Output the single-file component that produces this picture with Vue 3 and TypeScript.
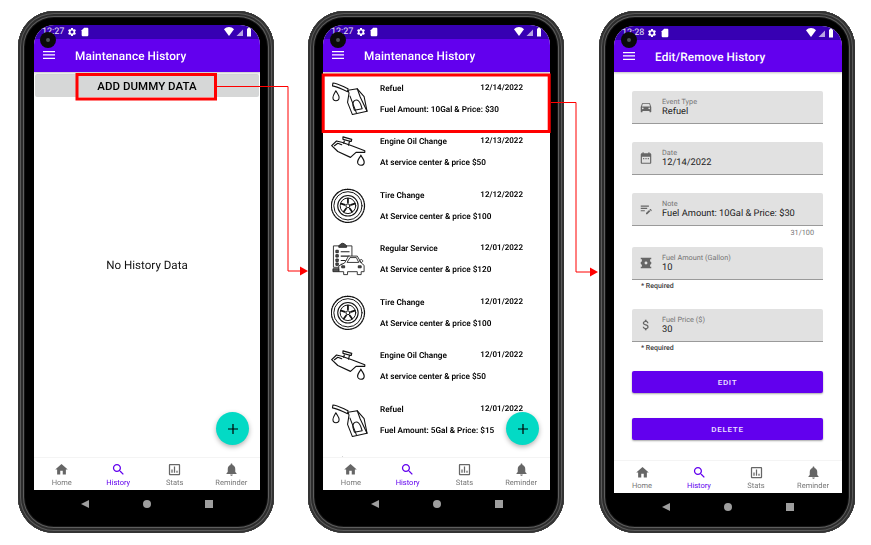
<script setup lang="ts">
interface Phone {
  id: 'empty' | 'list' | 'edit'
  time: string
  title: string
}

interface HistoryRow {
  icon: string
  title: string
  date: string
  note: string
}

interface Field {
  icon: string
  label: string
  value: string
  helper?: string
  helperClass?: string
}

const phones: Phone[] = [
  { id: 'empty', time: '12:27', title: 'Maintenance History' },
  { id: 'list', time: '12:27', title: 'Maintenance History' },
  { id: 'edit', time: '12:28', title: 'Edit/Remove History' }
]

// last row is scrolled under the tab bar, only the date and icon tip show
const rows: HistoryRow[] = [
  { icon: '#nozzle', title: 'Refuel', date: '12/14/2022', note: 'Fuel Amount: 10Gal & Price: $30' },
  { icon: '#oilcan', title: 'Engine Oil Change', date: '12/13/2022', note: 'At service center & price $50' },
  { icon: '#tire', title: 'Tire Change', date: '12/12/2022', note: 'At Service center & price $100' },
  { icon: '#service', title: 'Regular Service', date: '12/01/2022', note: 'At Service center & price $120' },
  { icon: '#tire', title: 'Tire Change', date: '12/01/2022', note: 'At Service center & price $100' },
  { icon: '#oilcan', title: 'Engine Oil Change', date: '12/01/2022', note: 'At service center & price $50' },
  { icon: '#nozzle', title: 'Refuel', date: '12/01/2022', note: 'Fuel Amount: 5Gal & Price: $15' },
  { icon: '#service', title: '', date: '12/01/2022', note: '' }
]

const fields: Field[] = [
  { icon: '#car', label: 'Event Type', value: 'Refuel' },
  { icon: '#calendar', label: 'Date', value: '12/14/2022' },
  { icon: '#note', label: 'Note', value: 'Fuel Amount: 10Gal & Price: $30', helper: '31/100', helperClass: 'count' },
  { icon: '#fuel', label: 'Fuel Amount (Gallon)', value: '10', helper: '* Required', helperClass: 'required' },
  { icon: '#dollar', label: 'Fuel Price ($)', value: '30', helper: '* Required', helperClass: 'required' }
]

const tabs = [
  { icon: '#home', label: 'Home' },
  { icon: '#search', label: 'History' },
  { icon: '#stats', label: 'Stats' },
  { icon: '#bell', label: 'Reminder' }
]
</script>

<template>
  <div class="page">
    <svg class="defs" xmlns="http://www.w3.org/2000/svg">
      <symbol id="home" viewBox="0 0 24 24"><path d="M10 20v-6h4v6h5v-8h3L12 3 2 12h3v8z" /></symbol>
      <symbol id="search" viewBox="0 0 24 24"><path d="M15.5 14h-.79l-.28-.27C15.41 12.59 16 11.11 16 9.5 16 5.91 13.09 3 9.5 3S3 5.91 3 9.5 5.91 16 9.5 16c1.61 0 3.09-.59 4.23-1.57l.27.28v.79l5 4.99L20.49 19l-4.99-5zm-6 0C7.01 14 5 11.99 5 9.5S7.01 5 9.5 5 14 7.01 14 9.5 11.99 14 9.5 14z" /></symbol>
      <symbol id="stats" viewBox="0 0 24 24"><path d="M19 3H5c-1.1 0-2 .9-2 2v14c0 1.1.9 2 2 2h14c1.1 0 2-.9 2-2V5c0-1.1-.9-2-2-2zm0 16H5V5h14v14zM7 12h2v5H7zm4-5h2v10h-2zm4 7h2v3h-2z" /></symbol>
      <symbol id="bell" viewBox="0 0 24 24"><path d="M12 22c1.1 0 2-.9 2-2h-4c0 1.1.89 2 2 2zm6-6v-5c0-3.07-1.64-5.64-4.5-6.32V4c0-.83-.67-1.5-1.5-1.5s-1.5.67-1.5 1.5v.68C7.63 5.36 6 7.92 6 11v5l-2 2v1h16v-1l-2-2z" /></symbol>
      <symbol id="gear" viewBox="0 0 24 24"><path d="M19.14 12.94c.04-.3.06-.61.06-.94 0-.32-.02-.64-.07-.94l2.03-1.58c.18-.14.23-.41.12-.61l-1.92-3.32c-.12-.22-.37-.29-.59-.22l-2.39.96c-.5-.38-1.03-.7-1.62-.94l-.36-2.54c-.04-.24-.24-.41-.48-.41h-3.84c-.24 0-.43.17-.47.41l-.36 2.54c-.59.24-1.13.57-1.62.94l-2.39-.96c-.22-.08-.47 0-.59.22L2.74 8.87c-.12.21-.08.47.12.61l2.03 1.58c-.05.3-.09.63-.09.94s.02.64.07.94l-2.03 1.58c-.18.14-.23.41-.12.61l1.92 3.32c.12.22.37.29.59.22l2.39-.96c.5.38 1.03.7 1.62.94l.36 2.54c.05.24.24.41.48.41h3.84c.24 0 .44-.17.47-.41l.36-2.54c.59-.24 1.13-.56 1.62-.94l2.39.96c.22.08.47 0 .59-.22l1.92-3.32c.12-.22.07-.47-.12-.61l-2.01-1.58zM12 15.6c-1.98 0-3.6-1.62-3.6-3.6s1.62-3.6 3.6-3.6 3.6 1.62 3.6 3.6-1.62 3.6-3.6 3.6z" /></symbol>
      <symbol id="sd" viewBox="0 0 24 24"><path d="M18 2h-8L4 8v12c0 1.1.9 2 2 2h12c1.1 0 2-.9 2-2V4c0-1.1-.9-2-2-2z" /></symbol>
      <symbol id="car" viewBox="0 0 24 24"><path d="M18.92 6.01C18.72 5.42 18.16 5 17.5 5h-11c-.66 0-1.21.42-1.42 1.01L3 12v8c0 .55.45 1 1 1h1c.55 0 1-.45 1-1v-1h12v1c0 .55.45 1 1 1h1c.55 0 1-.45 1-1v-8l-2.08-5.99zM6.5 16c-.83 0-1.5-.67-1.5-1.5S5.67 13 6.5 13s1.5.67 1.5 1.5S7.33 16 6.5 16zm11 0c-.83 0-1.5-.67-1.5-1.5s.67-1.5 1.5-1.5 1.5.67 1.5 1.5-.67 1.5-1.5 1.5zM5 11l1.5-4.5h11L19 11H5z" /></symbol>
      <symbol id="calendar" viewBox="0 0 24 24"><path d="M19 4h-1V2h-2v2H8V2H6v2H5c-1.11 0-1.99.9-1.99 2L3 20c0 1.1.89 2 2 2h14c1.1 0 2-.9 2-2V6c0-1.1-.9-2-2-2zm0 16H5V10h14v10zM9 14H7v-2h2v2zm4 0h-2v-2h2v2zm4 0h-2v-2h2v2z" /></symbol>
      <symbol id="note" viewBox="0 0 24 24"><path d="M3 10h11v2H3v-2zm0-2h14V6H3v2zm0 8h7v-2H3v2zm15.01-3.13l.71-.71c.39-.39 1.02-.39 1.41 0l1.41 1.41c.39.39.39 1.02 0 1.41l-.71.71-2.82-2.82zm-.71.71l-5.3 5.3V21h2.12l5.3-5.3-2.12-2.12z" /></symbol>
      <symbol id="fuel" viewBox="0 0 24 24"><path fill-rule="evenodd" d="M3 3h18v2.500h-2V8a2.500 2.500 0 0 0 2 2.400v3.200A2.500 2.500 0 0 0 19 16v2.500h2V21H3v-2.500h2V16a2.500 2.500 0 0 0-2-2.400v-3.200A2.500 2.500 0 0 0 5 8V5.500H3zM12 9.500a2.500 2.500 0 1 0 0 5 2.500 2.500 0 0 0 0-5z" /></symbol>
      <symbol id="dollar" viewBox="0 0 24 24"><path d="M11.8 10.9c-2.27-.59-3-1.2-3-2.15 0-1.09 1.01-1.85 2.7-1.85 1.78 0 2.44.85 2.5 2.1h2.21c-.07-1.72-1.12-3.3-3.21-3.81V3h-3v2.16c-1.94.42-3.5 1.68-3.5 3.61 0 2.31 1.91 3.46 4.7 4.13 2.5.6 3 1.48 3 2.41 0 .69-.49 1.79-2.7 1.79-2.06 0-2.87-.92-2.98-2.1h-2.2c.12 2.19 1.76 3.42 3.68 3.83V21h3v-2.15c1.95-.37 3.5-1.5 3.5-3.55 0-2.84-2.43-3.81-4.7-4.4z" /></symbol>

      <symbol id="nozzle" viewBox="0 0 38 36">
        <g fill="none" stroke="#111" stroke-width="1.1" stroke-linejoin="round" stroke-linecap="round">
          <path d="M2 1.500C6 1.500 11 4.500 17.500 7.500L17 10.500C11 8 7 5.500 1.500 4.500z" />
          <path d="M17.500 9L27 7.500L34 15.500L37 30.500L22 34L17 21.500L18.500 12z" />
          <path d="M27 7.500L30 16L37 30.500M19.500 15L26 32" />
          <path d="M24 29.500L22.500 24.500C22 21 24 19 26 19C28 19 29.500 21 30.500 23.500L32 28z" />
          <path d="M5 9.500C3.500 12.500 2 14 2 16.500C2 18.500 3.500 19.800 5 19.800C6.800 19.800 8.300 18.500 8.300 16.500C8.300 14 6.500 12.500 5 9.500z" />
        </g>
      </symbol>
      <symbol id="oilcan" viewBox="0 0 38 36">
        <g fill="none" stroke="#111" stroke-width="1.200" stroke-linejoin="round" stroke-linecap="round">
          <path d="M0.700 10.500L5.700 5.700L11 7L22 10.800L34.700 15.700V17.300H25.700L20 22.500L7 16.500z" />
          <path d="M3.500 10.500L7 8L11 9.500" />
          <path d="M12.300 1.500L21.300 4L20.700 6.200L12.300 4zM14 4.500L13 8M19 6L18 10" />
          <path d="M30.700 20.200C29.200 23.200 27.300 24.800 27.300 27.200C27.300 29.200 29 30.600 30.700 30.600C32.500 30.600 34.100 29.200 34.100 27.200C34.100 24.800 32.200 23.200 30.700 20.200z" />
        </g>
      </symbol>
      <symbol id="tire" viewBox="0 0 38 36">
        <g fill="none" stroke="#111" stroke-linecap="round">
          <circle cx="17.400" cy="17.800" r="17" stroke-width="1.300" stroke-dasharray="1.800 1" />
          <circle cx="17.400" cy="17.800" r="14.500" stroke-width="1" />
          <circle cx="17.400" cy="17.800" r="10.500" stroke-width="1.100" />
          <circle cx="17.400" cy="17.800" r="8" stroke-width="1" />
          <circle cx="17.400" cy="17.800" r="2" stroke-width="1" />
          <path stroke-width="1.800" d="M17.400 14.500V10.500M20.500 16.800L24.400 15.500M19.300 20.500L21.700 23.800M15.500 20.500L13.100 23.800M14.300 16.800L10.400 15.500" />
        </g>
      </symbol>
      <symbol id="service" viewBox="0 0 38 36">
        <g fill="none" stroke="#222" stroke-width="0.900" stroke-linejoin="round">
          <path fill="#fff" d="M2.500 3.500H21.500V25.500H2.500z" />
          <path fill="#444" d="M8 3.500L10 1.500L12 0.800L14 1.500L16 3.500V5H8z" />
          <path fill="#555" d="M5 8h2.500v2.500H5zM5 12.500h2.500V15H5zM5 17h2.500v2.500H5zM5 21h2.500v2.500H5z" />
          <path stroke-width="1.200" d="M10 9.500H19M10 14H19M10 18.500H15M10 22.500H13" />
          <path fill="#fff" d="M14 21L18 14H27L31 21L34 23.500V30H31V33H27V30H17V33H13V30H8V24z" />
          <path d="M16.500 20.500L19.500 15.500H26L28.500 20.500zM31 17.500a1.500 1.500 0 1 0 .1 0" />
          <path fill="#555" d="M2 27h6v3H2zM11 24h3v2h-3zM28 24h3v2h-3z" />
        </g>
      </symbol>
    </svg>

    <div v-for="phone in phones" :key="phone.id" class="phone" :class="`phone-${phone.id}`">
      <span class="camera"><i /></span>
      <div class="screen">
        <div class="status">
          <span class="clock">{{ phone.time }}</span>
          <svg class="status-icon gear"><use href="#gear" /></svg>
          <svg class="status-icon sd"><use href="#sd" /></svg>
          <span class="spacer" />
          <svg class="signals" viewBox="0 0 30 10" width="30" height="10">
            <path d="M0 2.200C3-.7 7-.7 10 2.200L5 9z" fill="#fff" />
            <path d="M19 2.500V9H12.500z" fill="#fff" fill-opacity=".65" />
            <path d="M23 1.500h1V.5h2v1h1V9.500H23z" fill="#fff" />
          </svg>
        </div>
        <div class="appbar">
          <svg class="menu" viewBox="0 0 12 8" width="12" height="8">
            <path d="M0 0h12v1.300H0zM0 3.300h12v1.300H0zM0 6.700h12V8H0z" fill="#fff" />
          </svg>
          <span class="title">{{ phone.title }}</span>
        </div>

        <div class="content">
          <template v-if="phone.id === 'empty'">
            <button class="dummy-btn" type="button">ADD DUMMY DATA</button>
            <div class="empty">No History Data</div>
          </template>

          <template v-else-if="phone.id === 'list'">
            <div v-for="(row, i) in rows" :key="i" class="row">
              <svg class="row-icon"><use :href="row.icon" /></svg>
              <div class="row-text">
                <div class="row-head">
                  <span class="row-title">{{ row.title }}</span>
                  <span class="row-date">{{ row.date }}</span>
                </div>
                <div v-if="row.note" class="row-note">{{ row.note }}</div>
              </div>
            </div>
          </template>

          <div v-else class="form">
            <div v-for="field in fields" :key="field.label" class="group" :class="field.helperClass">
              <div class="field">
                <svg class="field-icon"><use :href="field.icon" /></svg>
                <div class="field-body">
                  <span class="field-label">{{ field.label }}</span>
                  <span class="field-value">{{ field.value }}</span>
                </div>
              </div>
              <div v-if="field.helper" class="helper">{{ field.helper }}</div>
            </div>
            <button class="action edit" type="button">EDIT</button>
            <button class="action" type="button">DELETE</button>
          </div>

          <button v-if="phone.id !== 'edit'" class="fab" type="button" aria-label="Add">
            <svg viewBox="0 0 12 12" width="12" height="12"><path d="M5.400 1h1.200v4.400H11v1.200H6.600V11H5.400V6.600H1V5.400h4.400z" fill="#000" /></svg>
          </button>
        </div>

        <nav class="tabs">
          <div v-for="tab in tabs" :key="tab.label" class="tab" :class="{ active: tab.label === 'History' }">
            <svg class="tab-icon"><use :href="tab.icon" /></svg>
            <span>{{ tab.label }}</span>
          </div>
        </nav>
      </div>
      <div class="sysnav">
        <svg viewBox="0 0 8 8" width="8" height="8"><path d="M8 0v8L0 4z" /></svg>
        <svg viewBox="0 0 8 8" width="8" height="8"><circle cx="4" cy="4" r="4" /></svg>
        <svg viewBox="0 0 8 8" width="8" height="8"><path d="M0 0h8v8H0z" /></svg>
      </div>
    </div>

    <svg class="callouts" viewBox="0 0 871 545" width="871" height="545">
      <g fill="none" stroke="#f00">
        <rect x="77" y="74.500" width="138.500" height="24.500" stroke-width="3" />
        <rect x="323.200" y="75" width="226" height="56.500" stroke-width="3" />
        <path d="M217 86.500H288V271H302" stroke-width="1" />
        <path d="M551 102.500H576V272H592" stroke-width="1" />
      </g>
      <path d="M300 266.500L308 271L300 275.500zM590 267.500L598 272L590 276.500z" fill="#f00" />
    </svg>
  </div>
</template>

<style scoped>
.page {
  position: relative;
  display: flex;
  gap: 34px;
  width: 871px;
  height: 545px;
  padding: 11px 0 0 18px;
  box-sizing: border-box;
  background: #fff;
  overflow: hidden;
  font-family: Roboto, "Liberation Sans", sans-serif;
  text-rendering: geometricPrecision;
}

.defs {
  display: none;
}

.phone {
  position: relative;
  display: flex;
  flex-direction: column;
  flex: none;
  width: 256px;
  height: 522px;
  padding: 14px 14px 0 16px;
  box-sizing: border-box;
  border-radius: 36px;
  background: #000;
  box-shadow:
    inset 0 0 0 2px #333,
    inset 0 0 0 3px #5a5a5a,
    inset 0 0 0 5px #2c2c2c,
    inset 0 0 0 6px #5e5e5e,
    inset 0 0 0 7px #141414;
}

.phone-list {
  padding-left: 15px;
}

.phone-edit {
  margin-left: 1px;
  padding: 15px 13px 0 15px;
}

.camera {
  position: absolute;
  top: 21px;
  left: 22px;
  z-index: 2;
  display: flex;
  align-items: center;
  justify-content: center;
  width: 16px;
  height: 16px;
  border-radius: 50%;
  background: #0a0a0a;
}

.camera i {
  width: 4px;
  height: 4px;
  border-radius: 50%;
  background: #4d5258;
}

.screen {
  display: flex;
  flex-direction: column;
  flex: none;
  height: 465px;
  border-radius: 20px 20px 0 0;
  background: #fff;
  overflow: hidden;
  filter: blur(0.3px);
}

.phone-edit .screen {
  height: 467px;
}

.status {
  display: flex;
  align-items: center;
  flex: none;
  height: 14px;
  padding: 0 6px 0 8px;
  background: #3700b3;
  color: #e6e0f5;
  font-size: 9px;
}

.clock {
  width: 24px;
}

.status-icon {
  width: 10px;
  height: 10px;
  fill: #fff;
}

.gear {
  margin-left: 1px;
}

.sd {
  margin-left: 3px;
}

.spacer {
  flex: 1;
}

.appbar {
  position: relative;
  z-index: 1;
  display: flex;
  align-items: center;
  flex: none;
  gap: 20px;
  height: 33px;
  padding: 0 0 1px 9px;
  box-sizing: border-box;
  background: #6200ee;
  box-shadow: 0 1px 2px rgba(0, 0, 0, 0.25);
  color: #fff;
}

.phone-edit .appbar {
  height: 32px;
  padding-bottom: 0;
}

.title {
  margin-top: 1px;
  font-size: 11.8px;
  font-weight: 500;
  letter-spacing: 0.1px;
}

.content {
  position: relative;
  display: flex;
  flex-direction: column;
  flex: 1;
  min-height: 0;
  overflow: hidden;
}

.dummy-btn {
  flex: none;
  height: 23px;
  margin: 2px 1px 0;
  padding: 0;
  border: none;
  border-radius: 2px;
  background: #d6d7d7;
  color: #000;
  font-family: inherit;
  font-size: 11.5px;
  font-weight: 500;
  letter-spacing: 0.05px;
}

.empty {
  display: flex;
  align-items: center;
  justify-content: center;
  flex: 1;
  padding-bottom: 24px;
  color: #111;
  font-size: 11.6px;
}

.row {
  display: flex;
  flex: none;
  height: 53.6px;
  padding: 9px 27px 0 8px;
  box-sizing: border-box;
}

.row-icon {
  flex: none;
  width: 37px;
  height: 36px;
}

.row-text {
  flex: 1;
  margin-left: 12px;
  padding-top: 2.5px;
  color: #000;
  font-size: 8.2px;
  font-weight: 600;
  line-height: 10px;
}

.row-head {
  display: flex;
  justify-content: space-between;
}

.row-date {
  margin-top: -1px;
  font-size: 8px;
}

.row-note {
  margin-top: 11px;
}

.form {
  display: flex;
  flex-direction: column;
  padding: 19px 19px 0 18px;
}

.group {
  padding-bottom: 18.5px;
}

.group.count {
  padding-bottom: 0;
}

.group.required {
  padding-bottom: 19px;
}

.field {
  display: flex;
  height: 32.5px;
  box-sizing: border-box;
  border-bottom: 1px solid #9a9a9a;
  border-radius: 2px 2px 0 0;
  background: #e1e1e1;
}

.field-icon {
  flex: none;
  width: 14px;
  height: 14px;
  margin: 9px 9px 0 7px;
  fill: #666;
}

.field-body {
  display: flex;
  flex-direction: column;
  padding-top: 5.5px;
}

.field-label {
  color: #757575;
  font-size: 7.3px;
  line-height: 9px;
}

.field-value {
  margin-top: 0.5px;
  color: #222;
  font-size: 9.3px;
  line-height: 12px;
}

.helper {
  height: 10.5px;
  padding: 1.5px 0 0 9px;
  box-sizing: border-box;
  color: #3a3a3a;
  font-size: 7px;
  font-weight: 500;
  line-height: 10px;
}

.count .helper {
  height: 21.5px;
  padding: 2px 9px 0 0;
  color: #757575;
  font-size: 7.3px;
  font-weight: 400;
  text-align: right;
}

.action {
  flex: none;
  height: 22px;
  margin-bottom: 25px;
  padding: 0;
  border: none;
  border-radius: 2px;
  background: #6200ee;
  box-shadow: 0 1px 2px rgba(0, 0, 0, 0.35);
  color: #eee4ff;
  font-family: inherit;
  font-size: 8px;
  font-weight: 500;
  letter-spacing: 0.7px;
}

.fab {
  position: absolute;
  right: 11px;
  bottom: 12px;
  display: flex;
  align-items: center;
  justify-content: center;
  width: 33px;
  height: 33px;
  padding: 0;
  border: none;
  border-radius: 50%;
  background: #03dac5;
  box-shadow: 0 2px 5px rgba(0, 0, 0, 0.3);
}

.tabs {
  position: relative;
  display: grid;
  grid-template-columns: repeat(4, 1fr);
  flex: none;
  height: 33px;
  box-sizing: border-box;
  border-top: 1px solid #f4f4f4;
  background: #fff;
}

.tab {
  display: flex;
  flex-direction: column;
  align-items: center;
  padding: 3.5px 1px 0 0;
  color: #777;
  font-size: 7.5px;
  line-height: 9px;
}

.tab-icon {
  width: 15px;
  height: 15px;
  margin-bottom: 1px;
  fill: #666;
}

.tab.active {
  color: #6200ee;
}

.tab.active .tab-icon {
  fill: #6200ee;
}

.sysnav {
  display: flex;
  justify-content: center;
  gap: 54px;
  padding-top: 10px;
}

.sysnav svg {
  fill: #9e9e9e;
}

.callouts {
  position: absolute;
  top: 0;
  left: 0;
  pointer-events: none;
}
</style>
